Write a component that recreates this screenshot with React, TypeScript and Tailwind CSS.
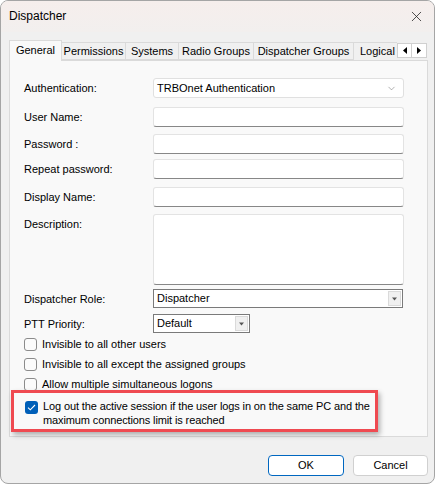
import { ChevronDown, X } from 'lucide-react';

const tabs = [
  { label: 'Permissions', w: 'w-[64px]' },
  { label: 'Systems', w: 'w-[53px]' },
  { label: 'Radio Groups', w: 'w-[75px]' },
  { label: 'Dispatcher Groups', w: 'w-[100px]' },
];

const font = { fontFamily: '"Segoe UI", "Liberation Sans", Arial, sans-serif' };

const TextBox = ({ className = '' }: { className?: string }) => (
  <div className={`w-[251px] rounded-[3px] border border-[#e3e3e3] border-b-[#878787] bg-white ${className}`} />
);

const ClassicCombo = ({ value, width }: { value: string; width: string }) => (
  <div className={`${width} h-[19px] flex items-center border border-[#7a7a7a] bg-white`}>
    <span className="flex-1 pl-[3px] text-[11px] leading-none text-black">{value}</span>
    <div className="mr-[1px] h-[15px] w-[13px] flex items-center justify-center bg-[#f0f0f0] border border-[#dadada]">
      <svg width="7" height="4" viewBox="0 0 7 4">
        <path d="M1 0.5h5L3.5 3.5z" fill="#555" />
      </svg>
    </div>
  </div>
);

const Check = ({ checked = false }: { checked?: boolean }) =>
  checked ? (
    <div className="w-[13px] h-[13px] shrink-0 rounded-[3px] bg-[#005fb8] flex items-center justify-center">
      <svg width="9" height="7" viewBox="0 0 9 7">
        <path d="M1 3.6l2.3 2.2L8 1" stroke="#fff" strokeWidth="1.1" fill="none" />
      </svg>
    </div>
  ) : (
    <div className="w-[13px] h-[13px] shrink-0 rounded-[3px] border border-[#8b8b8b] bg-[#fbfbfb]" />
  );

const Row = ({ label, children, className = '' }: { label: string; children: React.ReactNode; className?: string }) => (
  <div className={`flex items-start ${className}`}>
    <div className="w-[129px] text-[11px] leading-[20px] text-black">{label}</div>
    {children}
  </div>
);

export default function App() {
  return (
    <div className="w-[436px] h-[484px] bg-white" style={font}>
      <div className="w-[435px] h-[484px] rounded-[8px] border border-[#a5a5a5] bg-[#f0f0f0] flex flex-col overflow-hidden">
        {/* Title bar */}
        <div className="h-[31px] shrink-0 flex items-center justify-between pl-[8px] pr-[9px] pb-[1px] bg-gradient-to-b from-[#f6eeec] to-[#f2efee]">
          <span className="text-[12px] text-black">Dispatcher</span>
          <X size={17} strokeWidth={1.1} className="text-[#222]" />
        </div>

        {/* Tabs */}
        <div className="mt-[7px] ml-[8px] flex items-end h-[21px]">
          <div className="h-[21px] w-[53px] bg-[#f9f9f9] border border-b-0 border-[#dadada] flex items-center justify-center text-[11px] text-black -mb-[1px] relative z-10 pb-[2px]">
            General
          </div>
          {tabs.map(t => (
            <div
              key={t.label}
              className={`h-[18px] ${t.w} bg-[#f0f0f0] border border-l-0 border-[#dadada] flex items-center justify-center text-[11px] text-black whitespace-nowrap`}
            >
              {t.label}
            </div>
          ))}
          <div className="h-[18px] w-[43px] overflow-hidden bg-[#f0f0f0] border-t border-[#dadada] flex items-center pl-[6px] text-[11px] text-black whitespace-nowrap">
            Logical
          </div>
          <div className="mb-[2px] flex">
            <div className="w-[15px] h-[15px] bg-white border border-[#d0d0d0] flex items-center justify-center">
              <svg width="4" height="7" viewBox="0 0 4 7"><path d="M4 0v7L0 3.5z" fill="#000" /></svg>
            </div>
            <div className="w-[15px] h-[15px] bg-white border border-l-0 border-[#d0d0d0] flex items-center justify-center">
              <svg width="4" height="7" viewBox="0 0 4 7"><path d="M0 0v7l4-3.5z" fill="#000" /></svg>
            </div>
          </div>
        </div>

        {/* Panel */}
        <div className="ml-[8px] w-[419px] h-[377px] border border-[#dadada] bg-[#f9f9f9] pl-[14px] pt-[17px]">
          <Row label="Authentication:">
            <div className="w-[251px] h-[20px] rounded-[3px] border border-[#e0e0e0] bg-white flex items-center justify-between pl-[3px] pr-[6px]">
              <span className="text-[11px] text-black">TRBOnet Authentication</span>
              <ChevronDown size={11} strokeWidth={1} className="text-[#555]" />
            </div>
          </Row>
          <Row label="User Name:" className="mt-[9px]"><TextBox className="h-[20px]" /></Row>
          <Row label="Password :" className="mt-[7px]"><TextBox className="h-[20px]" /></Row>
          <Row label="Repeat password:" className="mt-[5px]"><TextBox className="h-[20px]" /></Row>
          <Row label="Display Name:" className="mt-[8px]"><TextBox className="h-[20px]" /></Row>
          <Row label="Description:" className="mt-[7px]"><TextBox className="h-[71px]" /></Row>
          <Row label="Dispatcher Role:" className="mt-[4px]">
            <ClassicCombo value="Dispatcher" width="w-[250px]" />
          </Row>
          <Row label="PTT Priority:" className="mt-[5px]">
            <ClassicCombo value="Default" width="w-[97px]" />
          </Row>

          <div className="flex flex-col">
            {['Invisible to all other users', 'Invisible to all except the assigned groups', 'Allow multiple simultaneous logons'].map(l => (
              <div key={l} className="h-[20px] flex items-center gap-[5px]">
                <Check />
                <span className="text-[11px] text-black whitespace-nowrap">{l}</span>
              </div>
            ))}
          </div>

          <div className="-ml-[13px] mt-[-4px] w-[367px] h-[42px] border-[3px] border-[#ef4a51] bg-[#f9f9f9] shadow-[2px_3px_5px_rgba(0,0,0,0.3)] relative z-10 flex items-start pl-[11px] pt-[6px] gap-[5px]">
            <div className="mt-[2px]"><Check checked /></div>
            <span className="text-[11px] leading-[14px] tracking-[-0.12px] text-black whitespace-nowrap">
              Log out the active session if the user logs in on the same PC and the
              <br />
              maximum connections limit is reached
            </span>
          </div>
        </div>

        {/* Buttons */}
        <div className="mt-[18px] flex justify-end gap-[9px] pr-[6px]">
          <button className="w-[76px] h-[21px] rounded-[4px] border border-[#0067c0] bg-white text-[11px] text-black">OK</button>
          <button className="w-[75px] h-[21px] rounded-[4px] border border-[#d0d0d0] bg-white text-[11px] text-black">Cancel</button>
        </div>
      </div>
    </div>
  );
}
